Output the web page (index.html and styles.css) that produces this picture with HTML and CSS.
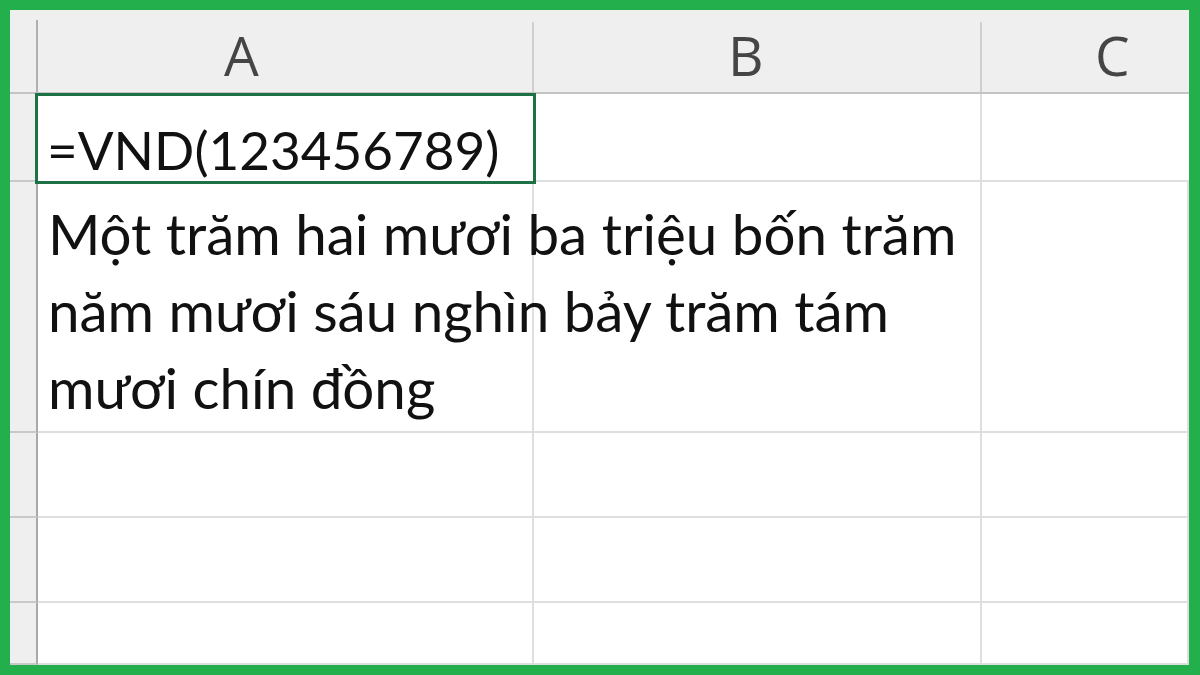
FILE: index.html
```html
<!DOCTYPE html>
<html lang="vi">
<head>
    <meta charset="UTF-8">
    <title>Hàm VND</title>
    <link rel="stylesheet" href="styles.css">
</head>
<body>
    <div class="frame">
        <div class="sheet">
            <!-- column headers -->
            <div class="corner"></div>
            <div class="col-head col-a">A</div>
            <div class="col-head col-b">B</div>
            <div class="col-head col-c">C</div>

            <!-- row 1: the formula -->
            <div class="row-head"></div>
            <div class="cell selected formula">=VND(123456789)</div>
            <div class="cell"></div>
            <div class="cell"></div>

            <!-- row 2: result spelled out, spills over B -->
            <div class="row-head"></div>
            <div class="cell result">Một trăm hai mươi ba triệu bốn trăm<br>năm mươi sáu nghìn bảy trăm tám<br>mươi chín đồng</div>
            <div class="cell"></div>

            <div class="row-head"></div>
            <div class="cell"></div>
            <div class="cell"></div>
            <div class="cell"></div>

            <div class="row-head"></div>
            <div class="cell"></div>
            <div class="cell"></div>
            <div class="cell"></div>

            <div class="row-head"></div>
            <div class="cell"></div>
            <div class="cell"></div>
            <div class="cell"></div>
        </div>
    </div>
</body>
</html>
```

FILE: styles.css
```css
html, body {
    margin: 0;
    padding: 0;
}
.frame {
    width: 1200px;
    height: 675px;
    box-sizing: border-box;
    border: 10px solid #23b04c;
    border-right-width: 11px;
    background: #fff;
    overflow: hidden;
}
.sheet {
    display: grid;
    grid-template-columns: 28px 496px 448px 1fr;
    grid-template-rows: 84px 88px 251px 85px 85px 1fr;
    height: 100%;
    font-family: Lato, "Liberation Sans", sans-serif;
}
.corner {
    background:
        linear-gradient(#b0b0b0, #b0b0b0) right 10px / 2px calc(100% - 10px) no-repeat,
        #efefef;
    border-bottom: 2px solid #c4c4c4;
}
.col-head {
    display: flex;
    align-items: flex-end;
    padding-bottom: 10px;
    box-sizing: border-box;
    background:
        linear-gradient(#cfcfcf, #cfcfcf) right 12px / 2px calc(100% - 12px) no-repeat,
        #efefef;
    border-bottom: 2px solid #c4c4c4;
    font-family: "Open Sans", sans-serif;
    font-size: 55px;
    line-height: 1;
    color: #454545;
}
.col-a { padding-left: 186px; }
.col-b { padding-left: 194px; }
.col-c { padding-left: 113px; background: #efefef; }

.row-head {
    background: #efefef;
    border-right: 2px solid #a9a9a9;
    border-bottom: 2px solid #c9c9c9;
}
.cell {
    border-right: 2px solid #dedede;
    border-bottom: 2px solid #dedede;
    box-sizing: border-box;
}
.cell:nth-child(4n) { border-right: none; }

.selected {
    margin: -1px -2px -2px -3px;
    border: 3px solid #1e7145;
    position: relative;
}
.formula {
    font-size: 53px;
    line-height: 1;
    padding: 27px 0 0 9px;
    color: #111;
    white-space: nowrap;
}
.result {
    grid-column: 2 / 4;
    border-right: 2px solid #dedede;
    background: linear-gradient(#dedede, #dedede) 494px 0 / 2px 100% no-repeat;
    font-size: 56.5px;
    line-height: 77px;
    padding: 13px 0 0 10px;
    color: #111;
    white-space: nowrap;
}
```
